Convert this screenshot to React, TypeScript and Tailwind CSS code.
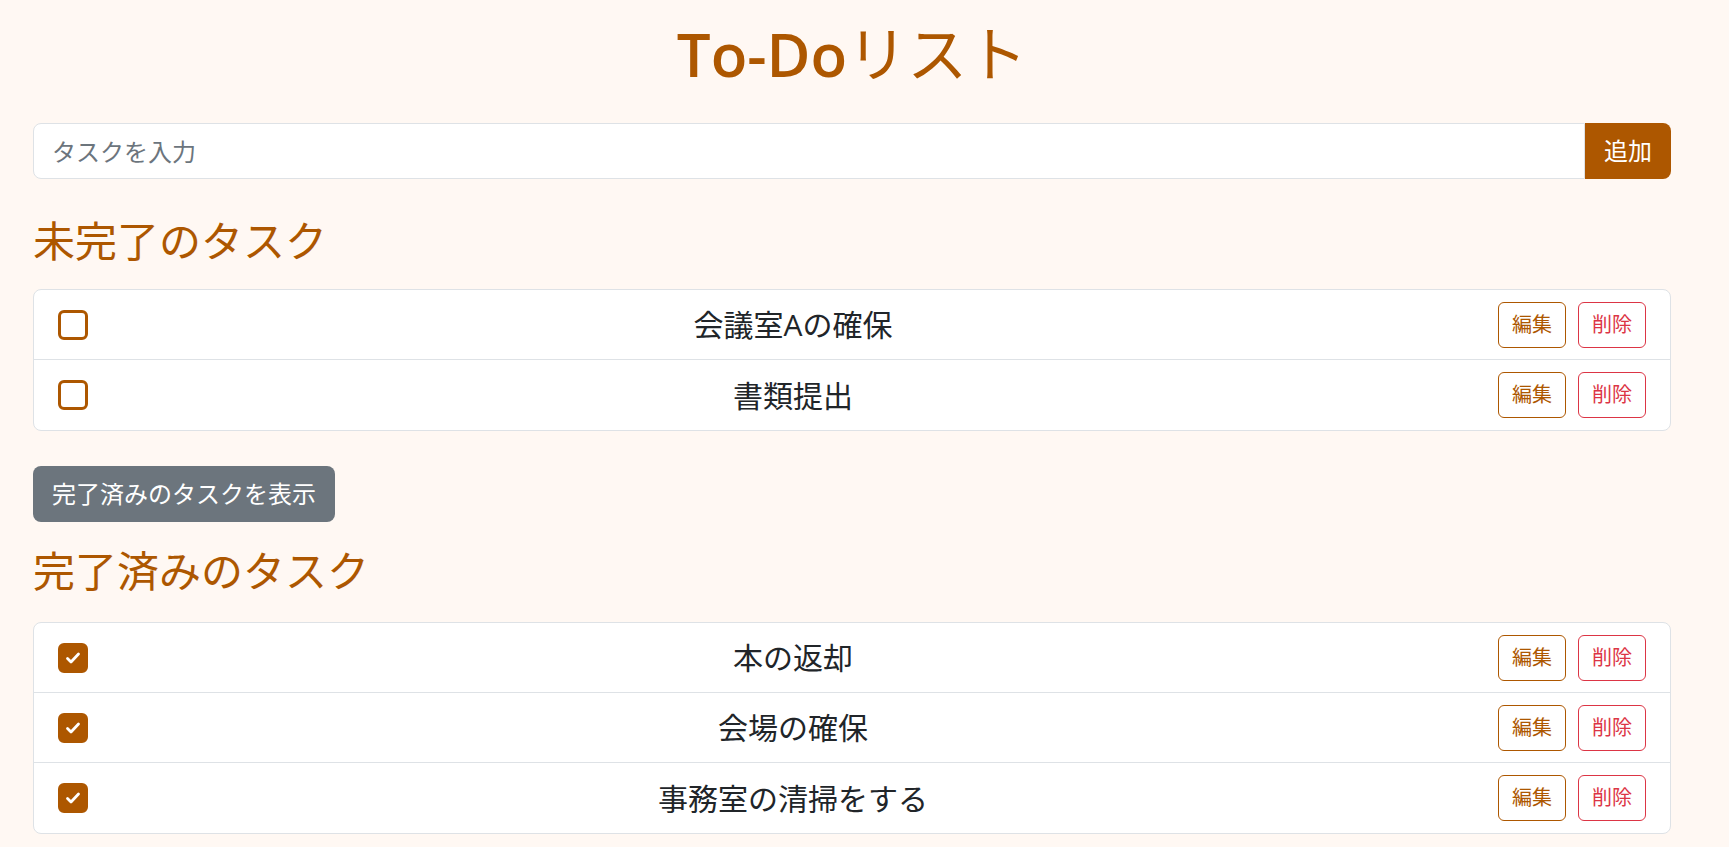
import { useState } from "react";

type Task = { id: number; text: string; done: boolean };

const initialTasks: Task[] = [
  { id: 1, text: "会議室Aの確保", done: false },
  { id: 2, text: "書類提出", done: false },
  { id: 3, text: "本の返却", done: true },
  { id: 4, text: "会場の確保", done: true },
  { id: 5, text: "事務室の清掃をする", done: true },
];

function CheckBox({ checked, onClick }: { checked: boolean; onClick: () => void }) {
  return (
    <button
      onClick={onClick}
      className={
        checked
          ? "flex h-[30px] w-[30px] shrink-0 items-center justify-center rounded-[6px] border-[3px] border-[#ad5700] bg-[#ad5700]"
          : "flex h-[30px] w-[30px] shrink-0 items-center justify-center rounded-[6px] border-[3px] border-[#ad5700] bg-white"
      }
    >
      {checked && (
        <svg viewBox="0 0 20 20" className="h-[20px] w-[20px]" fill="none">
          <path
            d="M4.5 10.5l3.5 3.5 7.5-8"
            stroke="white"
            strokeWidth="2.8"
            strokeLinecap="round"
            strokeLinejoin="round"
          />
        </svg>
      )}
    </button>
  );
}

function TaskRow({ task, onToggle }: { task: Task; onToggle: () => void }) {
  return (
    <li className="flex h-[70px] items-center border-b border-[#dee2e6] px-[24px] last:border-b-0">
      <CheckBox checked={task.done} onClick={onToggle} />
      <span className="flex-1 text-center text-[30px] text-[#212529]">{task.text}</span>
      <div className="flex gap-[12px]">
        <button className="h-[46px] w-[68px] rounded-[6px] border border-[#ad5700] text-[20px] text-[#ad5700]">
          編集
        </button>
        <button className="h-[46px] w-[68px] rounded-[6px] border border-[#dc3545] text-[20px] text-[#dc3545]">
          削除
        </button>
      </div>
    </li>
  );
}

export default function App() {
  const [tasks, setTasks] = useState(initialTasks);
  const [text, setText] = useState("");

  const toggle = (id: number) =>
    setTasks((ts) => ts.map((t) => (t.id === id ? { ...t, done: !t.done } : t)));

  const add = () => {
    if (!text.trim()) return;
    setTasks((ts) => [...ts, { id: Date.now(), text, done: false }]);
    setText("");
  };

  const todo = tasks.filter((t) => !t.done);
  const done = tasks.filter((t) => t.done);

  return (
    <div
      className="min-h-screen bg-[#fff8f3] pt-[18px] pr-[58px] pl-[33px] pb-[14px]"
      style={{ fontFamily: '"Open Sans", "Noto Sans CJK JP", sans-serif' }}
    >
      <h1 className="text-center text-[60px] leading-[72px] font-semibold text-[#ad5700]">
        To-Do<span className="font-normal">リスト</span>
      </h1>

      {/* input */}
      <div className="mt-[33px] flex h-[56px]">
        <input
          value={text}
          onChange={(e) => setText(e.target.value)}
          placeholder="タスクを入力"
          className="h-full flex-1 rounded-l-[8px] border border-[#dee2e6] bg-white pl-[18px] text-[24px] text-[#212529] outline-none placeholder:text-[#6c757d]"
        />
        <button
          onClick={add}
          className="h-full w-[86px] rounded-r-[8px] bg-[#ad5700] text-[24px] text-white"
        >
          追加
        </button>
      </div>

      <h2 className="mt-[37px] text-[42px] leading-[50px] text-[#ad5700]">未完了のタスク</h2>
      <ul className="mt-[23px] rounded-[8px] border border-[#dee2e6] bg-white">
        {todo.map((t) => (
          <TaskRow key={t.id} task={t} onToggle={() => toggle(t.id)} />
        ))}
      </ul>

      <button className="mt-[35px] h-[56px] rounded-[8px] bg-[#6c757d] px-[19px] text-[24px] text-white">
        完了済みのタスクを表示
      </button>

      <h2 className="mt-[24px] text-[42px] leading-[50px] text-[#ad5700]">完了済みのタスク</h2>
      <ul className="mt-[26px] rounded-[8px] border border-[#dee2e6] bg-white">
        {done.map((t) => (
          <TaskRow key={t.id} task={t} onToggle={() => toggle(t.id)} />
        ))}
      </ul>
    </div>
  );
}
